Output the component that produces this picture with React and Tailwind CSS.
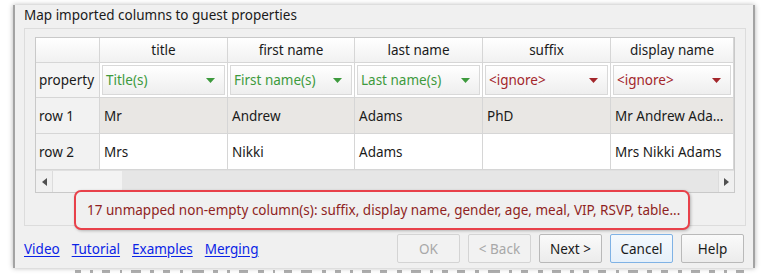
import React from 'react';

const columns = ['title', 'first name', 'last name', 'suffix', 'display name'];

const mappings = [
  { label: 'Title(s)', mapped: true },
  { label: 'First name(s)', mapped: true },
  { label: 'Last name(s)', mapped: true },
  { label: '<ignore>', mapped: false },
  { label: '<ignore>', mapped: false },
];

const rows = [
  { name: 'row 1', cells: ['Mr', 'Andrew', 'Adams', 'PhD', 'Mr Andrew Ada…'], shaded: true },
  { name: 'row 2', cells: ['Mrs', 'Nikki', 'Adams', '', 'Mrs Nikki Adams'], shaded: false },
];

// torn-off bits of the window below the dialog
const scraps = [6, 3, 8, 2, 10, 4, 7, 3, 12, 5, 3, 9, 6, 2, 8, 11, 4, 6, 3, 9, 7, 5, 10, 3, 6, 8, 4, 12, 3, 7, 5, 9, 4, 6, 8, 3, 10, 5, 7, 4, 9, 6, 3, 8];

const gridCols = 'grid grid-cols-[64px_128px_127px_128px_128px_1fr]';

function Arrow({ color }) {
  return (
    <svg width="9" height="5" viewBox="0 0 9 5" className="shrink-0">
      <path d="M0 0 H9 L4.5 5 Z" fill={color} />
    </svg>
  );
}

function Combo({ label, mapped }) {
  const color = mapped ? '#3d9a3d' : '#a3262b';
  return (
    <div className="h-full border-r border-b border-[#d6d6d6] p-[2px] bg-white">
      <div className="h-full flex items-center justify-between pl-[3px] pr-[9px] border border-[#d9d9d9] bg-gradient-to-b from-white to-[#eeeeee]">
        <span style={{ color }}>{label}</span>
        <Arrow color={color} />
      </div>
    </div>
  );
}

function Button({ children, disabled, focused }) {
  let cls = 'border-[#b9b9b9] bg-gradient-to-b from-[#fafafa] to-[#ececec] text-[#1a1a1a]';
  if (disabled) cls = 'border-[#d4d4d4] bg-[#f2f2f2] text-[#a8a8a8]';
  if (focused) cls = 'border-[#7fb2e5] bg-gradient-to-b from-[#f4f9fd] to-[#e6f0fa] text-[#1a1a1a]';
  return (
    <div className={`w-[63px] h-[29px] flex items-center justify-center rounded-[2px] border ${cls}`}>
      {children}
    </div>
  );
}

export default function App() {
  return (
    <div className="w-[764px] h-[276px] bg-white overflow-hidden pt-[5px] pl-[13px] font-['Noto_Sans',sans-serif] text-[13.5px] leading-[20px] text-[#1a1a1a]">
      <div className="relative w-[742px] h-[263px] bg-[#f0f0f0] border-l-2 border-r-2 border-[#a3a3a3] shadow-[0_0_5px_rgba(0,0,0,0.3)] pl-[9px]">
        <div className="h-[20px]">Map imported columns to guest properties</div>

        {/* group box */}
        <div className="mt-[3px] w-[722px] h-[198px] border border-[#dcdcdc] pl-[10px] pt-[8px]">
          <div className="w-[700px] border border-[#c9c9c9] bg-white">
            {/* header */}
            <div className={`${gridCols} h-[25px]`}>
              <div className="border-r border-b border-[#d6d6d6] bg-gradient-to-b from-white to-[#f1f1f1]" />
              {columns.map((c) => (
                <div key={c} className="flex items-center justify-center border-r border-b border-[#d6d6d6] bg-gradient-to-b from-white to-[#f1f1f1]">
                  {c}
                </div>
              ))}
            </div>

            {/* property row */}
            <div className={`${gridCols} h-[35px]`}>
              <div className="flex items-center pl-[3px] border-r border-b border-[#d6d6d6] bg-[#f4f4f4]">property</div>
              {mappings.map((m, i) => (
                <Combo key={i} {...m} />
              ))}
            </div>

            {/* data rows */}
            {rows.map((r) => (
              <div key={r.name} className={`${gridCols} h-[36px]`}>
                <div className="flex items-center pl-[3px] border-r border-b border-[#d6d6d6] bg-[#f2f2f2]">{r.name}</div>
                {r.cells.map((c, i) => (
                  <div key={i} className={`flex items-center pl-[4px] whitespace-nowrap overflow-hidden border-r border-b border-[#d6d6d6] ${r.shaded ? 'bg-[#e9e7e4]' : 'bg-white'}`}>
                    {c}
                  </div>
                ))}
              </div>
            ))}

            {/* horizontal scrollbar */}
            <div className="h-[22px] flex bg-[#e6e6e6] border-t border-[#e0e0e0]">
              <div className="w-[16px] flex items-center justify-center bg-[#f0f0f0]">
                <svg width="5" height="8" viewBox="0 0 5 8"><path d="M5 0 V8 L0 4 Z" fill="#505050" /></svg>
              </div>
              <div className="w-[70px] bg-[#f3f3f3] border-l border-[#dcdcdc]" />
              <div className="flex-1" />
              <div className="w-[16px] flex items-center justify-center bg-[#f0f0f0] border-l border-[#dcdcdc]">
                <svg width="5" height="8" viewBox="0 0 5 8"><path d="M0 0 V8 L5 4 Z" fill="#505050" /></svg>
              </div>
            </div>
          </div>
        </div>

        {/* footer: links + buttons */}
        <div className="mt-[8px] flex items-center justify-between pr-[9px]">
          <div className="flex gap-[12px] text-[#0b24e6] underline underline-offset-2">
            <span>Video</span>
            <span>Tutorial</span>
            <span>Examples</span>
            <span>Merging</span>
          </div>
          <div className="flex gap-[8px]">
            <Button disabled>OK</Button>
            <Button disabled>&lt; Back</Button>
            <Button>Next &gt;</Button>
            <Button focused>Cancel</Button>
            <Button>Help</Button>
          </div>
        </div>

        {/* annotation callout */}
        <div className="absolute left-[59px] top-[185px] w-[616px] h-[40px] flex items-center pl-[11px] border-2 border-[#e8414a] rounded-[7px] bg-[#f0f0f0] shadow-[1px_1px_3px_rgba(0,0,0,0.25)] text-[#8f1f22] whitespace-nowrap">
          17 unmapped non-empty column(s): suffix, display name, gender, age, meal, VIP, RSVP, table...
        </div>
      </div>
      <div className="mt-[2px] ml-[62px] w-[670px] flex justify-between">
        {scraps.map((w, i) => (
          <div key={i} className="h-[3px] bg-[#b0b0b0]" style={{ width: w }} />
        ))}
      </div>
    </div>
  );
}
